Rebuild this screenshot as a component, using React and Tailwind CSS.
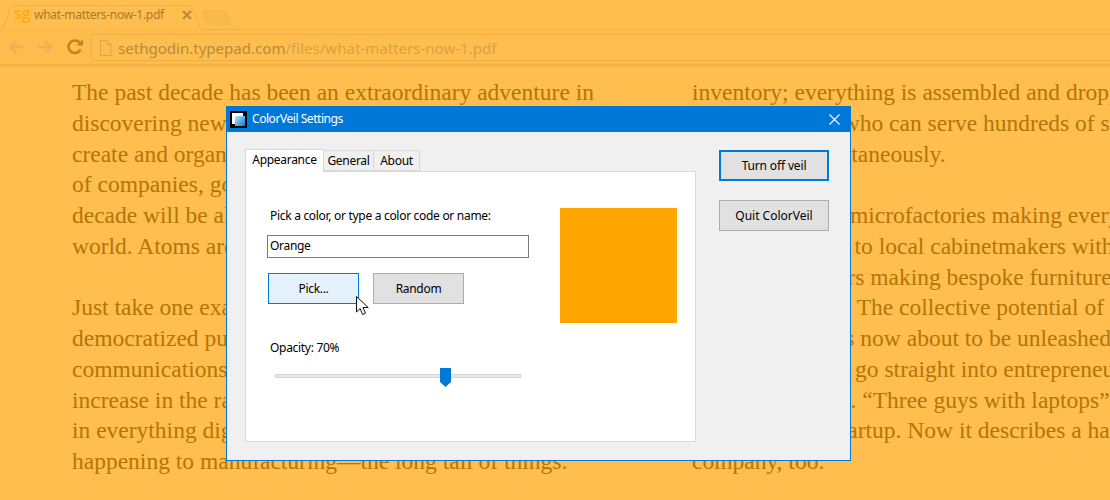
const leftLines = [
  'The past decade has been an extraordinary adventure in',
  'discovering new ways of working on the web, to',
  'create and organize in ways that never required',
  'of companies, going without any of their help. The next',
  'decade will be all about applying that to the real',
  'world. Atoms are the new bits, and they are here.',
  '\u00a0',
  'Just take one example of the web, which has',
  'democratized publishing, production, and',
  'communications, and with that saw a massive',
  'increase in the range of participation',
  'in everything digital: the long tail of bits. Now it is',
  'happening to manufacturing\u2014the long tail of things.',
]

const rightLines = [
  'inventory; everything is assembled and dropped',
  'of one business who can serve hundreds of small',
  'customers, simultaneously.',
  '\u00a0',
  'Imagine smaller microfactories making everything',
  'designs, heading to local cabinetmakers with',
  'CNC shop makers making bespoke furniture',
  'on demand, also. The collective potential of small',
  'entrepreneurs it\u2019s now about to be unleashed',
  'of a career could go straight into entrepreneurship',
  'old joke fits here. \u201cThree guys with laptops\u201d used',
  'to mark a web startup. Now it describes a hardware',
  'company, too.',
]

function ChromeBar() {
  return (
    <div className="relative h-[68px] bg-[#ffbe4e]">
      <div className="flex h-[30px] items-end border-b border-[#f4b64f] pl-[14px]">
        <svg className="absolute left-0 top-0" width="240" height="31" viewBox="0 0 240 31" fill="none">
          <path d="M0 29.5H1C3 29.5 4 27 5 24L10 9C11 6.5 12 5.5 15 5.5H188C191 5.5 192 6.500 193 9L199 25C200 28 202 29.500 205 29.500H240" stroke="#eeb04a" fill="#ffbe4e" />
          <path d="M203 10H222C225 10 226 11 227 13L232 24C232 25 231 25.500 230 25.500H210C208 25.500 207 24.500 206 23L202 12C202 11 202 10 203 10Z" fill="#f7b84c" />
        </svg>
        <div className="relative mb-[2px] flex h-[25px] w-[180px] items-center">
          <span className="w-[20px] pb-[3px] font-['Open_Sans',sans-serif] text-[16px] font-semibold leading-[20px] text-[#ffa90f]">sg</span>
          <span className="whitespace-nowrap font-['Noto_Sans',sans-serif] text-[12px] leading-[16px] tracking-[-0.3px] text-[#a87a2c]">what-matters-now-1.pdf</span>
          <svg className="ml-[18px] shrink-0" width="10" height="10" viewBox="0 0 10 10" stroke="#b98a3a" strokeWidth="2">
            <path d="M1 1l8 8M9 1l-8 8" />
          </svg>
        </div>
      </div>
      <div className="flex h-[35px] items-center border-b border-[#eeaf45] bg-[#fdbc4c] pl-[7px]">
        <svg width="18" height="16" viewBox="0 0 18 16" fill="none" stroke="#e9b05a" strokeWidth="2.400">
          <path d="M16 8H3M9 2L3 8l6 6" />
        </svg>
        <svg className="ml-[11px]" width="18" height="16" viewBox="0 0 18 16" fill="none" stroke="#e9b05a" strokeWidth="2.400">
          <path d="M2 8h13M9 2l6 6-6 6" />
        </svg>
        <svg className="ml-[12px]" width="18" height="18" viewBox="0 0 18 18" fill="none">
          <path d="M14.500 11.500A6.300 6.300 0 1 1 13.500 4.500" stroke="#b98526" strokeWidth="2.600" />
          <path d="M10.500 7.500H17V1Z" fill="#b98526" />
        </svg>
        <div className="-mr-[10px] ml-[7px] mt-[4px] flex h-[27px] flex-1 items-center self-start rounded-l-[3px] border border-[#eeaf45] bg-[#ffbe4e] pl-[7px]">
          <svg width="13" height="16" viewBox="0 0 13 16" fill="none" stroke="#d9a54c">
            <path d="M1.500.500h6.500l4 4v11h-10.500zM8 .500v4h4" />
          </svg>
          <span className="ml-[6px] whitespace-nowrap font-['Noto_Sans',sans-serif] text-[15.050px] leading-[20px] text-[#b58a3e]">
            sethgodin.typepad.com<span className="text-[#d9a145]">/files/what-matters-now-1.pdf</span>
          </span>
        </div>
      </div>
      <div className="h-[3px] bg-gradient-to-b from-[#eeb04a] to-[#ffbe4e]" />
    </div>
  )
}

function TextColumn({ lines, className }) {
  return (
    <div className={`shrink-0 whitespace-nowrap font-['Liberation_Serif',serif] text-[23.500px] leading-[30.750px] text-[#b47508] ${className}`}>
      {lines.map((line, i) => (
        <div key={i}>{line}</div>
      ))}
    </div>
  )
}

function Btn({ children, className }) {
  return (
    <div className={`flex h-[31px] items-center justify-center text-black ${className}`}>
      {children}
    </div>
  )
}

function Settings() {
  return (
    <div className="absolute left-[226px] top-[106px] h-[355px] w-[625px] border border-[#0078d7] bg-[#f0f0f0] font-['Noto_Sans',sans-serif] text-[12px] leading-[16px] tracking-[-0.3px] text-black">
      <div className="flex h-[25px] items-center bg-[#0078d7] pl-[3px] text-white">
        <svg width="17" height="17" viewBox="0 0 17 17">
          <defs>
            <linearGradient id="veil" x1="0" y1="0" x2="1" y2="1">
              <stop offset="0" stopColor="#b5e6f7" />
              <stop offset="1" stopColor="#0a7fd4" />
            </linearGradient>
          </defs>
          <rect width="17" height="17" fill="#000" />
          <rect x="2" y="2" width="11" height="11" fill="#fff" />
          <rect x="5" y="5" width="10" height="10" fill="url(#veil)" />
        </svg>
        <span className="ml-[5px] pb-[1px] text-[12px] tracking-[-0.45px]">ColorVeil Settings</span>
        <svg className="ml-auto mr-[10px]" width="11" height="11" viewBox="0 0 11 11" stroke="#fff" strokeWidth="1.100">
          <path d="M.5.5l10 10M10.500.5l-10 10" />
        </svg>
      </div>
      <div className="flex pl-[18px] pt-[17px]">
        <div className="w-[451px]">
          <div className="flex h-[22px] items-end">
            <div className="relative z-10 -mb-px flex h-[23px] w-[79px] items-center justify-center border border-b-0 border-[#d9d9d9] bg-white pb-[2px]">Appearance</div>
            <div className="flex h-[21px] w-[50px] items-center justify-center border-y border-r border-[#d9d9d9] bg-[#f0f0f0] pt-[1px]">General</div>
            <div className="flex h-[21px] w-[46px] items-center justify-center border-y border-r border-[#d9d9d9] bg-[#f0f0f0] pt-[1px]">About</div>
          </div>
          <div className="flex h-[271px] border border-[#d9d9d9] bg-white pl-[21px] pt-[36px]">
            <div className="w-[262px]">
              <div className="pl-[3px]">Pick a color, or type a color code or name:</div>
              <div className="mt-[11px] flex h-[23px] items-center border border-[#7a7a7a] pb-[1px] pl-[2px]">Orange</div>
              <div className="mt-[15px] flex gap-[14px] pl-[1px]">
                <Btn className="w-[91px] border border-[#0078d7] bg-[#e5f1fb]">Pick...</Btn>
                <Btn className="w-[91px] border border-[#adadad] bg-[#e1e1e1]">Random</Btn>
              </div>
              <div className="mt-[36px] pl-[3px]">Opacity: 70%</div>
              <div className="relative ml-[8px] mt-[18px] h-[4px] w-[246px] border border-[#d6d6d6] bg-[#e7eaea]">
                <svg className="absolute left-[164px] top-[-7px]" width="11" height="19" viewBox="0 0 11 19">
                  <path d="M0 0H11V14L5.500 19L0 14Z" fill="#0078d7" />
                </svg>
              </div>
            </div>
            <div className="ml-[31px] h-[115px] w-[117px] bg-[#ffa500]" />
          </div>
        </div>
        <div className="ml-[23px] flex w-[110px] flex-col gap-[19px] pt-[1px]">
          <Btn className="border-2 border-[#0078d7] bg-[#e1e1e1] tracking-[-0.15px]">Turn off veil</Btn>
          <Btn className="border border-[#adadad] bg-[#e1e1e1] tracking-normal">Quit ColorVeil</Btn>
        </div>
      </div>
    </div>
  )
}

function Cursor() {
  return (
    <svg className="absolute left-[356px] top-[296px]" width="13" height="20" viewBox="0 0 13 20">
      <path d="M.5.5V16l3.700-3.500L6.500 18.500l3-1.300-2.500-5.700h5.200Z" fill="#fff" stroke="#111" />
    </svg>
  )
}

export default function App() {
  return (
    <div className="relative h-[500px] w-[1110px] overflow-hidden bg-[#ffbe4e]">
      <ChromeBar />
      <div className="flex pt-[9px]">
        <TextColumn lines={leftLines} className="ml-[72px] w-[620px]" />
        <TextColumn lines={rightLines} />
      </div>
      <Settings />
      <Cursor />
    </div>
  )
}
